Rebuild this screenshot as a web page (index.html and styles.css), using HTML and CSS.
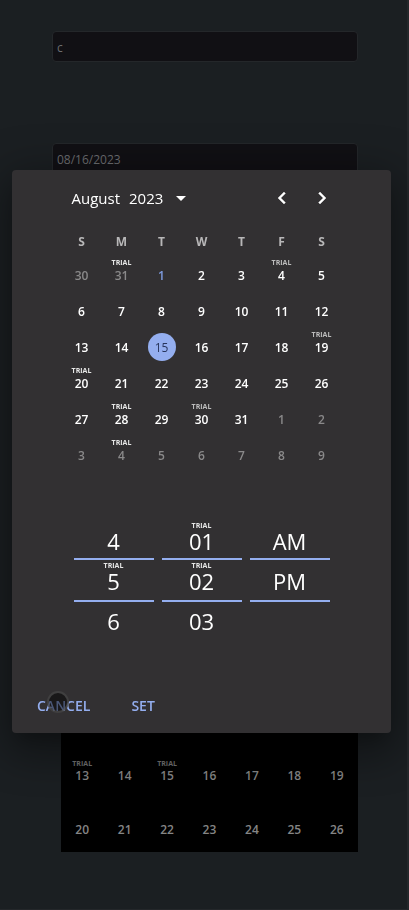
FILE: index.html
```
<!DOCTYPE html>
<html lang="en">
<head>
<meta charset="utf-8">
<meta name="viewport" content="width=device-width, initial-scale=1">
<title>Date and time</title>
<link rel="stylesheet" href="styles.css">
</head>
<body>
<main class="page">
  <input class="field" type="text" value="c" aria-label="Name">
  <input class="field" type="text" value="08/16/2023" aria-label="Date">
  <div class="inline-calendar">
    <table class="month" aria-label="Availability">
      <tbody>
        <tr><td><span class="trial">TRIAL</span>13</td><td>14</td><td><span class="trial">TRIAL</span>15</td><td>16</td><td>17</td><td>18</td><td>19</td></tr>
        <tr><td>20</td><td>21</td><td>22</td><td>23</td><td>24</td><td>25</td><td>26</td></tr>
      </tbody>
    </table>
  </div>
</main>

<div class="overlay">
  <section class="picker" role="dialog" aria-modal="true" aria-label="Choose date and time">
    <header class="picker-head">
      <button class="title" type="button"><span>August</span><span>2023</span>
        <svg class="caret" viewBox="0 0 10 5" aria-hidden="true"><path d="M0 0h10L5 5z"/></svg>
      </button>
      <button class="arrow" type="button" aria-label="Previous month"><svg viewBox="0 0 24 24" aria-hidden="true"><path d="M15.41 7.41 14 6l-6 6 6 6 1.41-1.41L10.83 12z"/></svg></button>
      <button class="arrow" type="button" aria-label="Next month"><svg viewBox="0 0 24 24" aria-hidden="true"><path d="M10 6 8.59 7.41 13.17 12l-4.58 4.59L10 18l6-6z"/></svg></button>
    </header>

    <table class="days">
      <thead>
        <tr><th>S</th><th>M</th><th>T</th><th>W</th><th>T</th><th>F</th><th>S</th></tr>
      </thead>
      <tbody>
        <tr><td><button class="out">30</button></td><td><span class="trial">TRIAL</span><button class="out">31</button></td><td><button class="today">1</button></td><td><button>2</button></td><td><button>3</button></td><td><span class="trial soft">TRIAL</span><button>4</button></td><td><button>5</button></td></tr>
        <tr><td><button>6</button></td><td><button>7</button></td><td><button>8</button></td><td><button>9</button></td><td><button>10</button></td><td><button>11</button></td><td><button>12</button></td></tr>
        <tr><td><button>13</button></td><td><button>14</button></td><td><button class="selected" aria-pressed="true">15</button></td><td><button>16</button></td><td><button>17</button></td><td><button>18</button></td><td><span class="trial soft">TRIAL</span><button>19</button></td></tr>
        <tr><td><span class="trial">TRIAL</span><button>20</button></td><td><button>21</button></td><td><button>22</button></td><td><button>23</button></td><td><button>24</button></td><td><button>25</button></td><td><button>26</button></td></tr>
        <tr><td><button>27</button></td><td><span class="trial">TRIAL</span><button>28</button></td><td><button>29</button></td><td><span class="trial soft">TRIAL</span><button>30</button></td><td><button>31</button></td><td><button class="out">1</button></td><td><button class="out">2</button></td></tr>
        <tr><td><button class="out">3</button></td><td><span class="trial">TRIAL</span><button class="out">4</button></td><td><button class="out">5</button></td><td><button class="out">6</button></td><td><button class="out">7</button></td><td><button class="out">8</button></td><td><button class="out">9</button></td></tr>
      </tbody>
    </table>

    <div class="wheels">
      <div class="wheel" role="group" aria-label="Hour">
        <button>4</button>
        <button><span class="trial">TRIAL</span>5</button>
        <button>6</button>
      </div>
      <div class="wheel" role="group" aria-label="Minute">
        <button><span class="trial">TRIAL</span>01</button>
        <button><span class="trial">TRIAL</span>02</button>
        <button>03</button>
      </div>
      <div class="wheel" role="group" aria-label="AM or PM">
        <button>AM</button>
        <button>PM</button>
      </div>
    </div>

    <footer class="actions">
      <button type="button">CANCEL<span class="pointer"></span></button>
      <button type="button">SET</button>
    </footer>
  </section>
</div>
</body>
</html>
```
FILE: styles.css
```
* {
  box-sizing: border-box;
}

html {
  background: #1b1f22;
}

body {
  margin: 0;
  min-height: 100vh;
  border-right: 2px solid #24272a;
  border-bottom: 1px solid #24272a;
  background: #1b1f22;
  color: #fff;
  font-family: "Open Sans", "Noto Sans", sans-serif;
}

button {
  margin: 0;
  padding: 0;
  border: 0;
  background: none;
  color: inherit;
  font: inherit;
}

.page {
  display: flex;
  flex-direction: column;
  padding: 31px 49px 0 52px;
}

.field {
  width: 100%;
  height: 31px;
  margin-bottom: 81px;
  padding: 1px 4px 0;
  border: 1px solid #24272a;
  border-radius: 4px;
  background: #111014;
  color: #6c6d70;
  font: 12px "Open Sans", "Noto Sans", sans-serif;
}

.inline-calendar {
  margin-left: 9px;
  padding-top: 490px;
  background: #000;
}

.month {
  width: 100%;
  border-collapse: collapse;
  table-layout: fixed;
  color: #858585;
  font-size: 12px;
  font-weight: 600;
  line-height: 18px;
  text-align: center;
}

.month td {
  position: relative;
  height: 54px;
  padding: 22px 0 14px;
}

.month tr:last-child td {
  height: 53px;
  padding-bottom: 13px;
}

.month .trial {
  top: 15px;
  color: #707070;
}

.trial {
  position: absolute;
  top: 2px;
  left: 0;
  right: 0;
  color: #e6e6e6;
  font-size: 7px;
  font-weight: 700;
  line-height: 8px;
  text-align: center;
}

.trial.soft {
  color: #bcbcbc;
}

.overlay {
  position: fixed;
  inset: 0;
  padding: 170px 18px 0 12px;
}

.picker {
  display: flex;
  flex-direction: column;
  align-items: center;
  padding: 8px 0 10px;
  border-radius: 4px;
  background: #323032;
  box-shadow: 0 11px 15px -7px rgba(0, 0, 0, .2), 0 24px 38px 3px rgba(0, 0, 0, .14), 0 9px 46px 8px rgba(0, 0, 0, .3);
}

.picker-head {
  display: flex;
  align-items: center;
  width: 280px;
  height: 40px;
}

.title {
  display: flex;
  align-items: center;
  gap: 9px;
  margin-right: auto;
  padding-left: 10px;
  font-size: 15px;
}

.caret {
  width: 10px;
  height: 5px;
  margin-left: 4px;
  fill: #fff;
}

.arrow {
  display: flex;
  align-items: center;
  justify-content: center;
  width: 40px;
  height: 40px;
}

.arrow svg {
  width: 24px;
  height: 24px;
  fill: #fff;
  stroke: #fff;
  stroke-width: .4;
}

.days {
  width: 280px;
  margin-top: 8px;
  border-collapse: collapse;
  table-layout: fixed;
  font-size: 12px;
  font-weight: 600;
}

.days th {
  height: 31px;
  padding: 0;
  color: #b8b7b8;
  font-weight: 700;
}

.days td {
  position: relative;
  height: 36px;
  padding: 0;
  text-align: center;
}

.days button {
  display: block;
  width: 28px;
  height: 28px;
  margin: 0 auto;
  border-radius: 50%;
}

.days .out {
  color: #8a898a;
}

.days .today {
  color: #7f9ce0;
}

.days .selected {
  background: #94aeef;
  color: #28355c;
  font-weight: 400;
}

.wheels {
  display: flex;
  gap: 8px;
  margin-top: 48px;
}

.wheel {
  position: relative;
  width: 80px;
  height: 120px;
  font-size: 22px;
  line-height: 20px;
}

.wheel::after {
  content: "";
  position: absolute;
  inset: 37px 0 39px;
  border: solid #94aeef;
  border-width: 2px 0;
  pointer-events: none;
}

.wheel button {
  position: relative;
  display: block;
  width: 100%;
  height: 40px;
}

.wheel .trial {
  top: 1px;
}

.actions {
  display: flex;
  align-self: stretch;
  gap: 41px;
  height: 36px;
  margin-top: 46px;
  padding-left: 25px;
  color: #94aeef;
  font-size: 14px;
  font-weight: 600;
}

.actions button {
  position: relative;
}

.pointer {
  position: absolute;
  top: 4px;
  left: 10px;
  width: 22px;
  height: 22px;
  border: 2px solid rgba(90, 90, 90, .6);
  border-radius: 50%;
  background: rgba(0, 0, 0, .5);
}
```
